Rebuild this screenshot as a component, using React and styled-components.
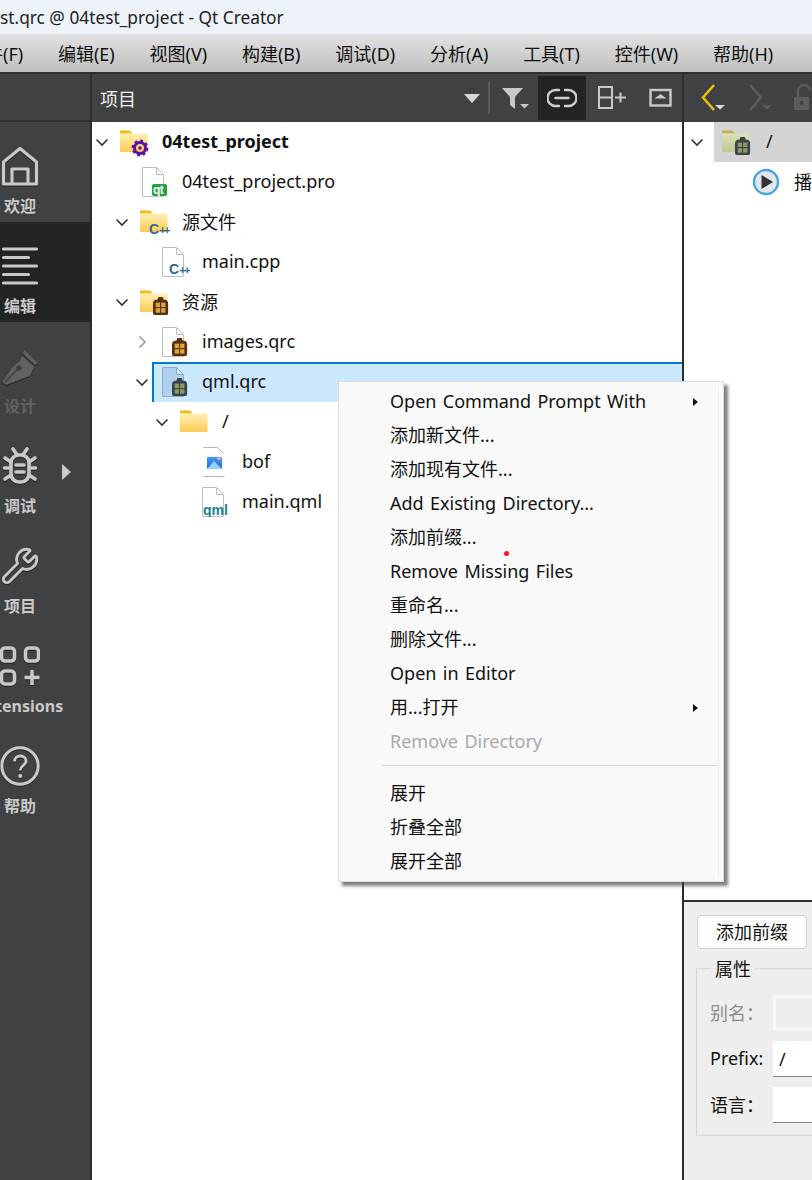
import React from 'react';
import styled, { createGlobalStyle } from 'styled-components';
import { Wrench } from 'lucide-react';

const GlobalStyle = createGlobalStyle`
  html, body { margin: 0; padding: 0; background: #fff; }
  * { box-sizing: border-box; }
`;

const FONT = `"Noto Sans", "Noto Sans CJK SC", sans-serif`;

const Window = styled.div`
  position: relative;
  width: 812px;
  height: 1180px;
  overflow: hidden;
  display: flex;
  flex-direction: column;
  font-family: ${FONT};
  font-size: 18px;
  color: #111;
`;

const TitleBar = styled.div`
  height: 34px;
  flex: none;
  background: #eef2f9;
  display: flex;
  align-items: center;
  white-space: nowrap;
  font-size: 17.3px;
  color: #222;
`;

const MenuBar = styled.div`
  height: 38px;
  flex: none;
  display: flex;
  align-items: center;
  gap: 34.8px;
  margin-left: -33px;
  background: linear-gradient(#e2e2e2, #bfbfbf);
  white-space: nowrap;
`;

const Body = styled.div`
  flex: 1;
  display: flex;
  min-height: 0;
`;

/* left mode bar */
const Sidebar = styled.div`
  width: 92px;
  flex: none;
  background: #404142;
  border-right: 2px solid #2e2e2e;
  border-top: 2px solid #2e2e2e;
`;

const SideTop = styled.div`
  height: 48px;
  border-bottom: 2px solid #2e2e2e;
`;

const Mode = styled.div`
  position: relative;
  height: 100px;
  padding-top: 24px;
  background: ${(p) => (p.$active ? '#222323' : 'transparent')};
  color: ${(p) => (p.$disabled ? '#616161' : '#c9c9c9')};
`;

const ModeInner = styled.div`
  width: 40px;
  display: flex;
  flex-direction: column;
  align-items: center;
`;

const ModeIcon = styled.div`
  width: 40px;
  height: 40px;
  display: flex;
  align-items: center;
  justify-content: center;
  filter: drop-shadow(0 1.5px 0 #222);
`;

const ModeLabel = styled.div`
  margin-top: 9px;
  font-size: 16px;
  line-height: 22px;
  font-weight: 700;
  white-space: nowrap;
`;

const ModeArrow = styled.div`
  position: absolute;
  left: 62px;
  top: 42px;
  width: 0;
  height: 0;
  border-left: 9px solid #c9c9c9;
  border-top: 8px solid transparent;
  border-bottom: 8px solid transparent;
`;

/* project tree */
const ProjectPane = styled.div`
  width: 592px;
  flex: none;
  display: flex;
  flex-direction: column;
`;

const Toolbar = styled.div`
  height: 50px;
  flex: none;
  display: flex;
  align-items: center;
  background: #404142;
  border-top: 2px solid #2e2e2e;
  border-right: ${(p) => (p.$divided ? '2px solid #2e2e2e' : 'none')};
  color: #eee;

  svg {
    flex: none;
  }
`;

const ToolLabel = styled.div`
  margin-left: 8px;
  flex: 1;
`;

const ComboArrow = styled.div`
  width: 0;
  height: 0;
  border-top: 9px solid #d8d8d8;
  border-left: 8px solid transparent;
  border-right: 8px solid transparent;
  margin-right: 8px;
`;

const ToolDivider = styled.div`
  width: 2px;
  height: 32px;
  background: #5c5c5c;
`;

const ToolButton = styled.div`
  width: ${(p) => p.$w}px;
  height: 44px;
  display: flex;
  align-items: center;
  justify-content: center;
  background: ${(p) => (p.$active ? '#222323' : 'transparent')};
`;

const Tree = styled.div`
  flex: 1;
  background: #fff;
  border-right: 2px solid #2e2e2e;
`;

const Row = styled.div`
  height: 40px;
  display: flex;
  align-items: center;
  padding-left: ${(p) => p.$depth * 20}px;
`;

const Twist = styled.div`
  width: 28px;
  flex: none;
  display: flex;
  align-items: center;
  justify-content: center;
  padding-right: 9px;
`;

const RowBody = styled.div`
  flex: 1;
  height: 40px;
  display: flex;
  align-items: center;
  margin-left: ${(p) => (p.$selected ? -8 : 0)}px;
  padding-left: ${(p) => (p.$selected ? 8 : 0)}px;
  background: ${(p) => (p.$selected ? '#cce8ff' : 'transparent')};
  box-shadow: ${(p) => (p.$selected ? 'inset 2px 2px 0 #0078d4' : 'none')};
`;

const IconSlot = styled.div`
  width: 42px;
  height: 30px;
  flex: none;
`;

const RowText = styled.div`
  margin-top: -2px;
  font-weight: ${(p) => (p.$bold ? 700 : 400)};
  white-space: nowrap;
`;

/* right pane */
const RightPane = styled.div`
  flex: 1;
  min-width: 0;
  display: flex;
  flex-direction: column;
  overflow: hidden;
`;

const NavIcons = styled.div`
  display: flex;
  align-items: center;
  gap: 17px;
  padding-left: 15px;
`;

const ResTree = styled.div`
  flex: 1;
  background: #fff;
`;

const ResRow = styled.div`
  height: 40px;
  display: flex;
  align-items: center;
  padding-left: ${(p) => p.$indent}px;

  svg {
    flex: none;
  }
`;

const ResSelected = styled.div`
  flex: 1;
  height: 40px;
  margin-left: 9px;
  padding-left: 8px;
  display: flex;
  align-items: center;
  background: #d4d4d4;
`;

const ResText = styled.div`
  margin: -2px 0 0 14px;
  white-space: nowrap;
`;

const FormPanel = styled.div`
  height: 280px;
  flex: none;
  background: #eee;
  border-top: 2px solid #2e2e2e;
  padding: 13px 0 0 13px;
`;

const PushButton = styled.div`
  width: 110px;
  height: 34px;
  padding-bottom: 2px;
  display: flex;
  align-items: center;
  justify-content: center;
  background: #fdfdfd;
  border: 1px solid #cfcfcf;
  border-radius: 4px;
`;

const GroupBox = styled.div`
  position: relative;
  width: 220px;
  height: 168px;
  margin: 19px 0 0 -1px;
  border: 1px solid #d6d6d6;
  padding: 26px 0 0 13px;
  display: grid;
  grid-template-columns: 63px 1fr;
  grid-auto-rows: 36px;
  row-gap: 10px;
  align-items: center;
`;

const GroupTitle = styled.div`
  position: absolute;
  left: 14px;
  top: -11px;
  padding: 0 4px;
  background: #eee;
  line-height: 22px;
`;

const FieldLabel = styled.div`
  margin-top: -2px;
  color: ${(p) => (p.$disabled ? '#8c8c8c' : '#111')};
  white-space: nowrap;
`;

const Field = styled.div`
  height: 36px;
  padding-left: 6px;
  line-height: 36px;
  background: ${(p) => (p.$disabled ? '#eee' : '#fff')};
  border: ${(p) => (p.$disabled ? '3px solid #f8f8f8' : 'none')};
  border-bottom: ${(p) => (p.$disabled ? '3px solid #f8f8f8' : '1px solid #888')};
`;

/* context menu */
const ContextMenu = styled.div`
  position: absolute;
  left: 338px;
  top: 381px;
  width: 386px;
  height: 501px;
  padding: 3px 0;
  background: #f9f9f9;
  border: 1px solid #dcdcdc;
  box-shadow: 4px 4px 3px rgba(60, 60, 60, 0.65);
`;

const MenuRow = styled.div`
  position: relative;
  height: 34px;
  line-height: 32px;
  padding-left: 51px;
  word-spacing: 1.7px;
  color: ${(p) => (p.$disabled ? '#a9a9a9' : '#111')};
  white-space: nowrap;
`;

const SubArrow = styled.span`
  position: absolute;
  left: 354px;
  top: 13px;
  width: 0;
  height: 0;
  border-left: 5px solid #111;
  border-top: 4px solid transparent;
  border-bottom: 4px solid transparent;
`;

const MenuSep = styled.div`
  height: 1px;
  margin: 6px 5px 11px 43px;
  background: #d6d6d6;
`;

const MenuGutter = styled.div`
  position: absolute;
  right: 4px;
  top: 3px;
  bottom: 3px;
  width: 1px;
  background: #efefef;
`;

const RedDot = styled.div`
  position: absolute;
  left: 165px;
  top: 169px;
  width: 5px;
  height: 5px;
  border-radius: 50%;
  background: #f01c1c;
`;

/* drawn icons */
const Chevron = ({ open, color = '#333' }) => (
  <svg width="16" height="16" viewBox="0 0 16 16" fill="none" stroke={color} strokeWidth="1.6">
    {open ? <path d="M2.500 5.500 8 11l5.500-5.500" /> : <path d="M5.500 2.500 11 8l-5.500 5.500" />}
  </svg>
);

const FolderShape = ({ tab = '#f6b90e', top = '#fff0b5', bottom = '#ffcb52' }) => (
  <>
    <defs>
      <linearGradient id={`fold${tab.slice(1)}`} x1="0" y1="0" x2="0" y2="1">
        <stop offset="0" stopColor={top} />
        <stop offset="1" stopColor={bottom} />
      </linearGradient>
    </defs>
    <path d="M0 3.500h10l3 3H0z" fill={tab} />
    <path d="M0 6.500h27.500v18.500H0z" fill={`url(#fold${tab.slice(1)})`} />
  </>
);

const FileShape = ({ fill = '#fff', line = '#bdbdbd' }) => (
  <path d="M2.500.5h14l7 7v22h-21z M16.500.5v7h7" fill={fill} stroke={line} strokeWidth="1" />
);

const ResBadge = ({ x = 13, y = 10, body = '#5a2f17', cell = '#d8a832' }) => (
  <g transform={`translate(${x} ${y}) scale(1.08 1.12)`}>
    <path d="M5 0h4l1 2.500h1.500Q14 3 14 6v8.500q0 1.500-1.500 1.500h-11Q0 16 0 14.500V6q0-3 2.500-3.500H4z" fill={body} />
    <rect x="2.500" y="5" width="4" height="4" fill={cell} />
    <rect x="7.500" y="5" width="4" height="4" fill={cell} />
    <rect x="2.500" y="10" width="4" height="4" fill={cell} />
    <rect x="7.500" y="10" width="4" height="4" fill={cell} />
  </g>
);

const CppBadge = ({ x, y }) => (
  <text x={x} y={y} fontFamily="Liberation Sans, sans-serif" fontWeight="700" fontSize="14" fill="#2c6a96">
    C
    <tspan fontSize="11" letterSpacing="-1.500">++</tspan>
  </text>
);

const IconBox = ({ children }) => (
  <svg width="30" height="30" viewBox="0 0 30 30">{children}</svg>
);

const ProjectFolder = () => (
  <IconBox>
    <FolderShape />
    <g transform="translate(20 21)">
      <circle r="5.500" fill="none" stroke="#5b10a8" strokeWidth="3" />
      <circle r="7.200" fill="none" stroke="#5b10a8" strokeWidth="2.400" strokeDasharray="2.800 2.850" />
      <circle r="1.800" fill="#5b10a8" />
    </g>
  </IconBox>
);

const SourceFolder = () => (
  <IconBox>
    <FolderShape />
    <CppBadge x="9" y="27" />
  </IconBox>
);

const ResourceFolder = () => (
  <IconBox>
    <FolderShape />
    <ResBadge />
  </IconBox>
);

const PlainFolder = () => (
  <IconBox>
    <FolderShape />
  </IconBox>
);

const ProFile = () => (
  <IconBox>
    <FileShape />
    <rect x="12" y="17" width="15" height="12" rx="2" fill="#1fa33a" />
    <text x="13" y="26.500" fontFamily="Liberation Sans, sans-serif" fontWeight="700" fontSize="12" letterSpacing="-0.5" fill="#fff">qt</text>
  </IconBox>
);

const CppFile = () => (
  <IconBox>
    <FileShape />
    <CppBadge x="9" y="27" />
  </IconBox>
);

const QrcFile = ({ selected }) => (
  <IconBox>
    {selected ? <FileShape fill="#afd0ee" line="#8fa9c4" /> : <FileShape />}
    {selected ? <ResBadge x={12} y={11} body="#38444c" cell="#8c9a62" /> : <ResBadge x={12} y={11} />}
  </IconBox>
);

const ImageFile = () => (
  <IconBox>
    <path d="M3.500 29.500h21M3.500.5h14l6 6" fill="none" stroke="#b5b5b5" />
    <defs>
      <linearGradient id="sky" x1="0" y1="0" x2="0" y2="1">
        <stop offset="0" stopColor="#3aa0f0" />
        <stop offset="1" stopColor="#2a5fe0" />
      </linearGradient>
    </defs>
    <rect x="7" y="10" width="15" height="12" rx="1" fill="url(#sky)" />
    <path d="M7 22l7-8 8 8z" fill="#8fd2fa" />
    <path d="M19 9.500v4M17 11.500h4" stroke="#f4a6c8" strokeWidth="1.500" />
  </IconBox>
);

const QmlFile = () => (
  <IconBox>
    <FileShape />
    <text x="3" y="28" fontFamily="Liberation Sans, sans-serif" fontWeight="700" fontSize="14" fill="#17808f">qml</text>
  </IconBox>
);

const HomeIcon = () => (
  <svg width="40" height="40" viewBox="0 0 40 40" fill="none" stroke="currentColor" strokeWidth="3.200" strokeLinejoin="round">
    <path d="M3.500 38V16L20 2.500 36.500 16v22z" />
    <path d="M12 38V23h16v15" />
  </svg>
);

const EditIcon = () => (
  <svg width="40" height="40" viewBox="0 0 40 40" stroke="currentColor" strokeWidth="3.200" strokeLinecap="round">
    <path d="M3.500 3h33M3.500 11.500h25M3.500 20h33M3.500 28.500h25M3.500 37h33" />
  </svg>
);

const PenIcon = () => (
  <svg width="40" height="40" viewBox="0 0 40 40">
    <g transform="translate(0 2)">
      <path d="M24 2l14 13-3 2-12-11zM22 8l12 11-4 9-24 9-4-3 10-14 8-7z" fill="currentColor" />
      <circle cx="19" cy="20" r="2.800" fill="#404142" />
      <path d="M5 34l12-12" stroke="#404142" strokeWidth="1.600" />
    </g>
  </svg>
);

const BugIcon = () => (
  <svg width="40" height="40" viewBox="0 0 40 40" fill="none" stroke="currentColor" strokeWidth="3.600" strokeLinecap="round">
    <rect x="11" y="9" width="18" height="27" rx="8" />
    <path d="M16 19h8M16 26h8" />
    <path d="M13 3l3.500 5M27 3l-3.500 5M5 12l6 4M35 12l-6 4M4.500 22h6M35.500 22h-6M5 33l6-4M35 33l-6-4" />
  </svg>
);

const ExtIcon = () => (
  <svg width="40" height="40" viewBox="0 0 40 40" fill="none" stroke="currentColor" strokeWidth="3.500">
    <rect x="1.500" y="2" width="13" height="13" rx="3.500" />
    <rect x="25.500" y="2" width="13" height="13" rx="3.500" />
    <rect x="1.500" y="25" width="13" height="13" rx="3.500" />
    <path d="M32 24v15M24.500 31.500h15" />
  </svg>
);

const HelpIcon = () => (
  <svg width="40" height="40" viewBox="0 0 40 40" fill="none" stroke="currentColor">
    <circle cx="20" cy="20" r="18.200" strokeWidth="3" />
    <path d="M14.500 15.500c0-3.500 2.500-5.500 5.800-5.500s5.700 2 5.700 5c0 4.500-5.800 4.500-5.800 9.500" strokeWidth="2.800" />
    <circle cx="20.200" cy="30" r="2" fill="currentColor" stroke="none" />
  </svg>
);

const FilterIcon = () => (
  <svg width="30" height="30" viewBox="0 0 30 30">
    <path d="M3 5h21l-8 9v12l-5-4v-8z" fill="#c9c9c9" />
    <path d="M21 21h9l-4.500 4.500z" fill="#c9c9c9" />
  </svg>
);

const LinkIcon = () => (
  <svg width="30" height="20" viewBox="0 0 30 20" fill="none" stroke="#cfcfcf" strokeWidth="2.400" strokeLinecap="round">
    <path d="M12 2H8.500a8 8 0 0 0 0 16H12M18 2h3.500a8 8 0 0 1 0 16H18M8.500 10h13" />
  </svg>
);

const SplitIcon = () => (
  <svg width="30" height="24" viewBox="0 0 30 24" fill="none" stroke="#c9c9c9" strokeWidth="2">
    <rect x="1" y="1" width="13" height="21" />
    <path d="M1 11.500h13M17 11.500h11M22.500 6.500v10" />
  </svg>
);

const CollapseIcon = () => (
  <svg width="24" height="20" viewBox="0 0 24 20">
    <rect x="1.500" y="2" width="20" height="15.500" fill="none" stroke="#c9c9c9" strokeWidth="2.400" />
    <path d="M11.500 6l6 4.500h-12z" fill="#c9c9c9" />
  </svg>
);

const NavArrow = ({ dir, color, drop }) => (
  <svg width="30" height="30" viewBox="0 0 30 30" fill="none">
    <path d={dir === 'back' ? 'M15 2 4 14.500 15 27' : 'M4 2 15 14.500 4 27'} stroke={color} strokeWidth="2.600" />
    <path d="M16 22h10l-5 4.500z" fill={drop} />
  </svg>
);

const LockIcon = () => (
  <svg width="24" height="30" viewBox="0 0 24 30">
    <path d="M5 14V8a6 6 0 0 1 12 0" fill="none" stroke="#5c5c5c" strokeWidth="2.400" />
    <rect x="1" y="14" width="15" height="13" fill="#5c5c5c" />
    <circle cx="8.500" cy="20" r="2" fill="#404142" />
  </svg>
);

const DimResFolder = () => (
  <IconBox>
    <FolderShape tab="#c4b054" top="#dbe0b8" bottom="#bcc98e" />
    <ResBadge body="#38444c" cell="#8c9a62" />
  </IconBox>
);

const PlayIcon = () => (
  <svg width="28" height="28" viewBox="0 0 28 28">
    <circle cx="14" cy="14" r="12" fill="#e4e7ea" stroke="#45a5dc" strokeWidth="2.400" />
    <path d="M9.500 7 21 14 9.500 21z" fill="#333" />
  </svg>
);

const modes = [
  { label: '欢迎', icon: <HomeIcon /> },
  { label: '编辑', icon: <EditIcon />, active: true },
  { label: '设计', icon: <PenIcon />, disabled: true },
  { label: '调试', icon: <BugIcon />, arrow: true },
  { label: '项目', icon: <Wrench size={40} strokeWidth={1.700} /> },
  { label: 'Extensions', icon: <ExtIcon /> },
  { label: '帮助', icon: <HelpIcon /> },
];

const treeRows = [
  { depth: 0, open: true, icon: <ProjectFolder />, text: '04test_project', bold: true },
  { depth: 1, icon: <ProFile />, text: '04test_project.pro' },
  { depth: 1, open: true, icon: <SourceFolder />, text: '源文件' },
  { depth: 2, icon: <CppFile />, text: 'main.cpp' },
  { depth: 1, open: true, icon: <ResourceFolder />, text: '资源' },
  { depth: 2, open: false, icon: <QrcFile />, text: 'images.qrc' },
  { depth: 2, open: true, icon: <QrcFile selected />, text: 'qml.qrc', selected: true },
  { depth: 3, open: true, icon: <PlainFolder />, text: '/' },
  { depth: 4, icon: <ImageFile />, text: 'bof' },
  { depth: 4, icon: <QmlFile />, text: 'main.qml' },
];

const menuItems = [
  { text: 'Open Command Prompt With', sub: true },
  { text: '添加新文件...' },
  { text: '添加现有文件...' },
  { text: 'Add Existing Directory...' },
  { text: '添加前缀...' },
  { text: 'Remove Missing Files' },
  { text: '重命名...' },
  { text: '删除文件...' },
  { text: 'Open in Editor' },
  { text: '用...打开', sub: true },
  { text: 'Remove Directory', disabled: true },
  { sep: true },
  { text: '展开' },
  { text: '折叠全部' },
  { text: '展开全部' },
];

const topMenus = ['文件(F)', '编辑(E)', '视图(V)', '构建(B)', '调试(D)', '分析(A)', '工具(T)', '控件(W)', '帮助(H)'];

export default function App() {
  return (
    <Window>
      <GlobalStyle />
      <TitleBar>st.qrc @ 04test_project - Qt Creator</TitleBar>
      <MenuBar>
        {topMenus.map((m) => (
          <div key={m}>{m}</div>
        ))}
      </MenuBar>
      <Body>
        <Sidebar>
          <SideTop />
          {modes.map((m) => (
            <Mode key={m.label} $active={m.active} $disabled={m.disabled}>
              <ModeInner>
                <ModeIcon>{m.icon}</ModeIcon>
                <ModeLabel>{m.label}</ModeLabel>
              </ModeInner>
              {m.arrow && <ModeArrow />}
            </Mode>
          ))}
        </Sidebar>
        <ProjectPane>
          <Toolbar $divided>
            <ToolLabel>项目</ToolLabel>
            <ComboArrow />
            <ToolDivider />
            <ToolButton $w={48}>
              <FilterIcon />
            </ToolButton>
            <ToolButton $w={48} $active>
              <LinkIcon />
            </ToolButton>
            <ToolButton $w={54}>
              <SplitIcon />
            </ToolButton>
            <ToolButton $w={42}>
              <CollapseIcon />
            </ToolButton>
          </Toolbar>
          <Tree>
            {treeRows.map((r) => (
              <Row key={r.text} $depth={r.depth}>
                <Twist>{r.open !== undefined && <Chevron open={r.open} color={r.open ? '#333' : '#999'} />}</Twist>
                <RowBody $selected={r.selected}>
                  <IconSlot>{r.icon}</IconSlot>
                  <RowText $bold={r.bold}>{r.text}</RowText>
                </RowBody>
              </Row>
            ))}
          </Tree>
        </ProjectPane>
        <RightPane>
          <Toolbar>
            <NavIcons>
              <NavArrow dir="back" color="#efbe13" drop="#d8d8d8" />
              <NavArrow dir="forward" color="#5c5c5c" drop="#5c5c5c" />
              <LockIcon />
            </NavIcons>
          </Toolbar>
          <ResTree>
            <ResRow $indent={5}>
              <Chevron open />
              <ResSelected>
                <DimResFolder />
                <ResText>/</ResText>
              </ResSelected>
            </ResRow>
            <ResRow $indent={68}>
              <PlayIcon />
              <ResText>播放</ResText>
            </ResRow>
          </ResTree>
          <FormPanel>
            <PushButton>添加前缀</PushButton>
            <GroupBox>
              <GroupTitle>属性</GroupTitle>
              <FieldLabel $disabled>别名：</FieldLabel>
              <Field $disabled />
              <FieldLabel>Prefix:</FieldLabel>
              <Field>/</Field>
              <FieldLabel>语言：</FieldLabel>
              <Field />
            </GroupBox>
          </FormPanel>
        </RightPane>
      </Body>
      <ContextMenu>
        <MenuGutter />
        {menuItems.map((item, i) =>
          item.sep ? (
            <MenuSep key={i} />
          ) : (
            <MenuRow key={item.text} $disabled={item.disabled}>
              {item.text}
              {item.sub && <SubArrow />}
            </MenuRow>
          )
        )}
        <RedDot />
      </ContextMenu>
    </Window>
  );
}
